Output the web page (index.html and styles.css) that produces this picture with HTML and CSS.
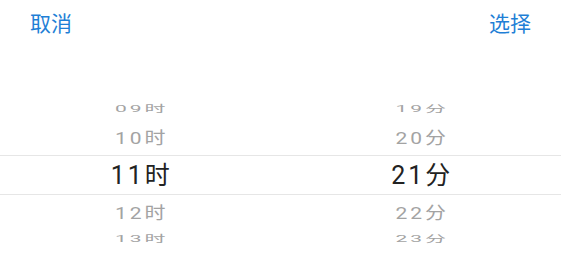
FILE: index.html
```html
<!DOCTYPE html>
<html lang="zh-CN">
<head>
  <meta charset="UTF-8">
  <meta name="viewport" content="width=device-width, initial-scale=1">
  <title>选择时间</title>
  <link rel="stylesheet" href="styles.css">
</head>
<body>

<header class="toolbar">
  <span class="btn">取消</span>
  <span class="btn">选择</span>
</header>

<div class="picker">
  <div class="column">
    <div class="item far">09时</div>
    <div class="item near top">10时</div>
    <div class="item selected">11时</div>
    <div class="item near bottom">12时</div>
    <div class="item far end">13时</div>
  </div>
  <div class="column">
    <div class="item far">19分</div>
    <div class="item near top">20分</div>
    <div class="item selected">21分</div>
    <div class="item near bottom">22分</div>
    <div class="item far end">23分</div>
  </div>
</div>

</body>
</html>
```

FILE: styles.css
```css
body {
  font-family: Roboto, "Noto Sans CJK SC", sans-serif;
  background-color: #fff;
  margin: 0;
  padding: 0;
}
.toolbar {
  height: 48px;
  padding: 0 30px;
  display: flex;
  justify-content: space-between;
  align-items: center;
}
.btn {
  color: #1f7fd6;
  font-size: 21px;
  line-height: 1;
}
.picker {
  display: flex;
  padding-top: 49px;
}
.column {
  flex: 1;
  display: flex;
  flex-direction: column;
}
.item {
  display: flex;
  justify-content: center;
  align-items: center;
  font-size: 21px;
  line-height: 1;
  letter-spacing: 3px;
  padding-left: 3px;
  color: #a3a3a3;
}
.item.far {
  height: 24px;
  transform: scaleY(0.45);
}
.item.far.end {
  height: 16px;
}
.item.near.top {
  height: 34px;
}
.item.near.bottom {
  height: 36px;
}
.item.near {
  transform: scaleY(0.8);
}
.item.selected {
  height: 38px;
  border-top: 1px solid #e6e6e6;
  border-bottom: 1px solid #e6e6e6;
  font-size: 25px;
  letter-spacing: 3px;
  color: #222;
}
```
